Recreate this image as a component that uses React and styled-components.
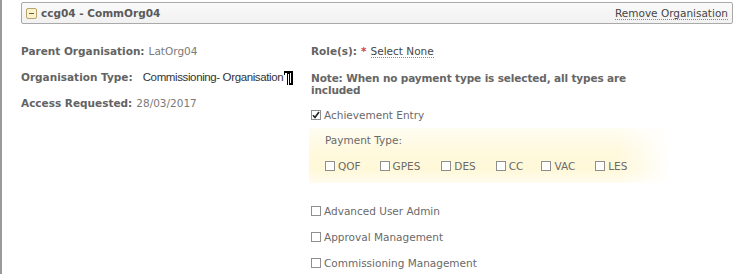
import React from 'react';
import styled, { createGlobalStyle } from 'styled-components';

const Global = createGlobalStyle`
  html, body { margin: 0; padding: 0; background: #fff; }
  body { font-family: "DejaVu Sans", Verdana, sans-serif; }
`;

const Page = styled.div`
  width: 744px;
  height: 274px;
  box-sizing: border-box;
  border-left: 2px solid #9a9a9a;
  padding: 2px 11px 0 19px;
  overflow: hidden;
`;

const Header = styled.div`
  height: 22px;
  box-sizing: border-box;
  border: 1px solid #a9a9a9;
  border-radius: 2px;
  background: linear-gradient(#fafafa, #f1f1f1);
  display: flex;
  align-items: center;
  justify-content: space-between;
  padding: 0 4px 0 4px;
`;

const Title = styled.div`
  display: flex;
  align-items: center;
  gap: 4px;
  font-size: 10.5px;
  font-weight: bold;
  color: #5a5a5a;
`;

const Toggle = styled.span`
  width: 11px;
  height: 11px;
  box-sizing: border-box;
  border: 1px solid #b8a56a;
  border-radius: 2px;
  background: #fbf3cf;
  display: flex;
  align-items: center;
  justify-content: center;
  &::after {
    content: '';
    width: 5px;
    height: 1px;
    background: #6b5a2a;
  }
`;

const LinkText = styled.span`
  font-size: 10.5px;
  color: #454545;
  border-bottom: 1px dotted #888;
  line-height: 12px;
`;

const Body = styled.div`
  display: grid;
  grid-template-columns: 290px 1fr;
  padding-top: 14px;
`;

const Column = styled.div`
  display: flex;
  flex-direction: column;
`;

const Field = styled.div`
  height: 26px;
  display: flex;
  align-items: center;
  font-size: 10.5px;
  color: #7a7a7a;
  white-space: nowrap;
`;

const Label = styled.span`
  font-weight: bold;
  color: #636363;
  margin-right: 4px;
`;

const TypeValue = styled.span`
  font-family: "Liberation Sans", Arial, sans-serif;
  font-size: 11.5px;
  color: #333;
  margin-left: 6px;
  letter-spacing: -0.38px;
`;

const Cursor = styled.svg`
  margin-left: 1px;
  margin-top: 2px;
`;

const Star = styled.span`
  color: #d8423c;
  font-weight: bold;
  margin-right: 4px;
`;

const Note = styled.div`
  font-size: 10.5px;
  font-weight: bold;
  color: #666;
  line-height: 12px;
  width: 330px;
  letter-spacing: -0.13px;
  margin-top: 8px;
  margin-bottom: 10px;
`;

const CheckRow = styled.label`
  display: flex;
  align-items: center;
  height: ${p => p.h || 26}px;
  font-size: 10.5px;
  color: #6a6a6a;
  gap: 3px;
  margin-right: ${p => p.mr || 0}px;
`;

const Box = styled.span`
  width: 10px;
  height: 10px;
  box-sizing: border-box;
  border: 1px solid #8f8f8f;
  background: #fff;
  display: inline-flex;
  align-items: center;
  justify-content: center;
`;

const PaymentBox = styled.div`
  width: 362px;
  margin: 4px 0 15px -2px;
  padding: 6px 0 9px 16px;
  box-sizing: border-box;
  background:
    linear-gradient(to right, rgba(255,255,255,0) 85%, #fff 100%),
    linear-gradient(#fffdf3, #fff9de 40%, #fff8d8 75%, #fffcef);
`;

const PayLabel = styled.div`
  font-size: 10.5px;
  color: #6a6a6a;
  height: 14px;
  margin-bottom: 10px;
`;

const PayRow = styled.div`
  display: flex;
  align-items: center;
`;

function Check({ checked }) {
  return (
    <Box>
      {checked && (
        <svg width="8" height="8" viewBox="0 0 8 8">
          <path d="M1 4.2 L3 6.5 L7 1" fill="none" stroke="#222" strokeWidth="1.6" />
        </svg>
      )}
    </Box>
  );
}

const payTypes = [
  ['QOF', 19],
  ['GPES', 21],
  ['DES', 20],
  ['CC', 18],
  ['VAC', 20],
  ['LES', 0],
];

const roles = ['Advanced User Admin', 'Approval Management', 'Commissioning Management'];

export default function App() {
  return (
    <>
      <Global />
      <Page>
        <Header>
          <Title>
            <Toggle />
            ccg04 - CommOrg04
          </Title>
          <LinkText>Remove Organisation</LinkText>
        </Header>
        <Body>
          <Column>
            <Field><Label>Parent Organisation:</Label>LatOrg04</Field>
            <Field>
              <Label>Organisation Type:</Label>
              <TypeValue>Commissioning- Organisation</TypeValue>
              <Cursor width="9" height="16" viewBox="0 0 9 16">
                <path d="M0 1 H5 V4 H4 V15 H3 V3 H1 V5 H0 Z" fill="#000" />
                <path d="M5 1 H9 V15 H5 Z" fill="#000" />
                <path d="M6 3 H7 V13 H6 Z" fill="#fff" />
              </Cursor>
            </Field>
            <Field><Label>Access Requested:</Label>28/03/2017</Field>
          </Column>
          <Column>
            <Field><Label>Role(s):</Label><Star>*</Star><LinkText>Select None</LinkText></Field>
            <Note>Note: When no payment type is selected, all types are included</Note>
            <CheckRow h={18}><Check checked />Achievement Entry</CheckRow>
            <PaymentBox>
              <PayLabel>Payment Type:</PayLabel>
              <PayRow>
                {payTypes.map(([t, mr]) => (
                  <CheckRow key={t} h={16} mr={mr}><Check />{t}</CheckRow>
                ))}
              </PayRow>
            </PaymentBox>
            {roles.map(r => (
              <CheckRow key={r} h={26}><Check />{r}</CheckRow>
            ))}
          </Column>
        </Body>
      </Page>
    </>
  );
}
